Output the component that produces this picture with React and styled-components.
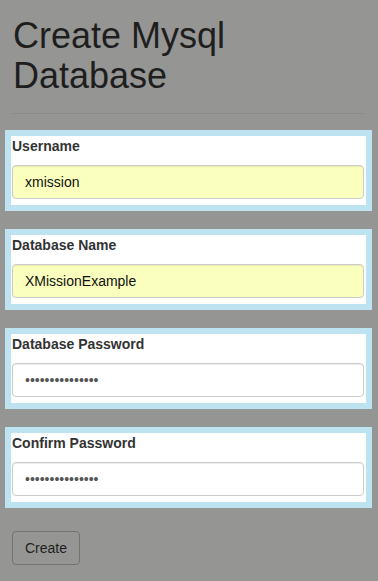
import React from 'react';
import styled, { createGlobalStyle } from 'styled-components';

const GlobalStyle = createGlobalStyle`
  html, body {
    margin: 0;
    padding: 0;
    background: #959694;
  }
  body {
    font-family: "Liberation Sans", Arial, sans-serif;
    font-size: 14px;
    line-height: 1.42857;
    color: #333;
  }
  * {
    box-sizing: border-box;
  }
`;

const Page = styled.div`
  min-height: 581px;
  padding: 0 14px 0 12px;
`;

const Title = styled.h1`
  margin: 16px 0 0 1px;
  font-size: 36px;
  font-weight: 400;
  line-height: 1.1;
  color: #1e1e1e;
`;

const Rule = styled.hr`
  margin: 18px 0 16px;
  border: 0;
  border-top: 1px solid #8a8b89;
`;

const Form = styled.form`
  display: flex;
  flex-direction: column;
  gap: 18px;
`;

const Group = styled.div`
  margin: 0 -8px 0 -7px;
  border: 6px solid #bde3f1;
  background: #fff;
  padding: 0 2px 6px 1px;
`;

const Label = styled.label`
  display: block;
  margin-bottom: 9px;
  font-weight: 700;
  line-height: 20px;
  color: #333;
`;

const Input = styled.input`
  display: block;
  width: 100%;
  height: 34px;
  padding: 6px 12px;
  font-family: "Liberation Sans", Arial, sans-serif;
  font-size: 14px;
  color: ${(p) => (p.$filled ? '#111' : '#555')};
  background: ${(p) => (p.$filled ? '#faffbd' : '#fff')};
  border: 1px solid #ccc;
  border-radius: 4px;
  box-shadow: inset 0 1px 1px rgba(0, 0, 0, 0.075);
  outline: none;
`;

const Button = styled.button`
  margin-top: 23px;
  height: 34px;
  padding: 6px 12px;
  font-family: "Liberation Sans", Arial, sans-serif;
  font-size: 14px;
  line-height: 20px;
  color: #1e1e1e;
  background: transparent;
  border: 1px solid #737472;
  border-radius: 4px;
`;

const fields = [
  { id: 'username', label: 'Username', type: 'text', value: 'xmission', filled: true },
  { id: 'dbname', label: 'Database Name', type: 'text', value: 'XMissionExample', filled: true },
  { id: 'dbpass', label: 'Database Password', type: 'password', value: 'xmissionexample' },
  { id: 'dbpass2', label: 'Confirm Password', type: 'password', value: 'xmissionexample' },
];

export default function App() {
  return (
    <>
      <GlobalStyle />
      <Page>
        <Title>
          Create Mysql
          <br />
          Database
        </Title>
        <Rule />
        <Form onSubmit={(e) => e.preventDefault()}>
          {fields.map((f) => (
            <Group key={f.id}>
              <Label htmlFor={f.id}>{f.label}</Label>
              <Input
                id={f.id}
                type={f.type}
                defaultValue={f.value}
                $filled={f.filled}
              />
            </Group>
          ))}
        </Form>
        <Button type="button">Create</Button>
      </Page>
    </>
  );
}
